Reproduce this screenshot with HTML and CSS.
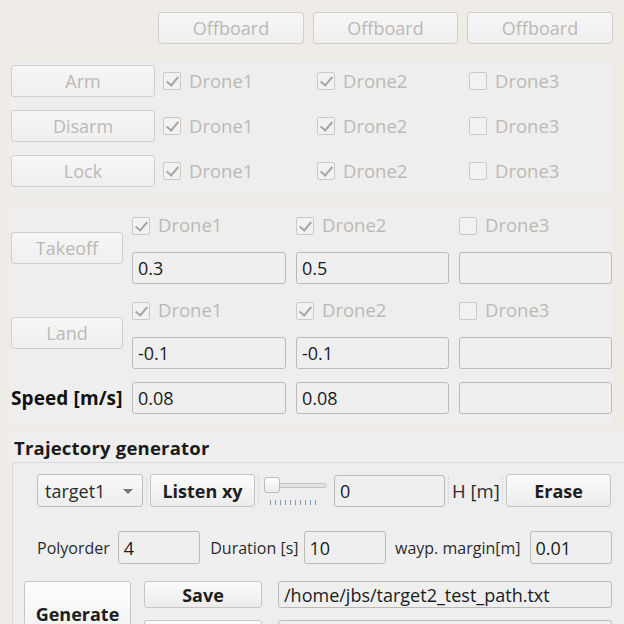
FILE: index.html
```html
<!DOCTYPE html>
<html>
<head>
<meta charset="utf-8">
<link rel="stylesheet" href="styles.css">
</head>
<body>
<div class="offrow">
  <button class="btn dis">Offboard</button>
  <button class="btn dis">Offboard</button>
  <button class="btn dis">Offboard</button>
</div>

<div class="panel p1">
  <button class="btn dis b1">Arm</button>
  <label class="cb"><span class="box on"></span>Drone1</label>
  <label class="cb"><span class="box on"></span>Drone2</label>
  <label class="cb"><span class="box"></span>Drone3</label>

  <button class="btn dis b1">Disarm</button>
  <label class="cb"><span class="box on"></span>Drone1</label>
  <label class="cb"><span class="box on"></span>Drone2</label>
  <label class="cb"><span class="box"></span>Drone3</label>

  <button class="btn dis b1">Lock</button>
  <label class="cb"><span class="box on"></span>Drone1</label>
  <label class="cb"><span class="box on"></span>Drone2</label>
  <label class="cb"><span class="box"></span>Drone3</label>
</div>

<div class="panel p2">
  <button class="btn dis b2 r12">Takeoff</button>
  <label class="cb"><span class="box on"></span>Drone1</label>
  <label class="cb"><span class="box on"></span>Drone2</label>
  <label class="cb"><span class="box"></span>Drone3</label>
  <div class="inp w1 c2">0.3</div>
  <div class="inp w2">0.5</div>
  <div class="inp w2"></div>

  <button class="btn dis b2 r34">Land</button>
  <label class="cb"><span class="box on"></span>Drone1</label>
  <label class="cb"><span class="box on"></span>Drone2</label>
  <label class="cb"><span class="box"></span>Drone3</label>
  <div class="inp w1 c2">-0.1</div>
  <div class="inp w2">-0.1</div>
  <div class="inp w2"></div>

  <div class="speed">Speed [m/s]</div>
  <div class="inp w1">0.08</div>
  <div class="inp w2">0.08</div>
  <div class="inp w2"></div>
</div>

<div class="traj">
  <div class="title">Trajectory generator</div>
  <div class="frame">
    <div class="row1">
      <div class="combo">target1<span class="arrow"></span></div>
      <span class="dots"></span>
      <button class="btn bold listen">Listen xy</button>
      <span class="dots"></span>
      <div class="slider">
        <div class="groove"></div>
        <div class="handle"></div>
        <div class="ticks"></div>
      </div>
      <div class="inp hin">0</div>
      <span class="dots"></span>
      <span class="hlabel">H [m]</span>
      <span class="dots"></span>
      <button class="btn bold erase">Erase</button>
    </div>
    <div class="row2">
      <span class="lbl">Polyorder</span>
      <div class="inp small poly">4</div>
      <span class="lbl">Duration [s]</span>
      <div class="inp small dur">10</div>
      <span class="lbl">wayp. margin[m]</span>
      <div class="inp small marg">0.01</div>
    </div>
    <div class="row3">
      <button class="btn bold gen"><span class="gtxt">Generate</span></button>
      <button class="btn bold save">Save</button>
      <div class="inp path">/home/jbs/target2_test_path.txt</div>
      <button class="btn save"></button>
      <div class="inp path"></div>
    </div>
  </div>
</div>
</body>
</html>
```
FILE: styles.css
```css
* { box-sizing: border-box; }
html, body { margin: 0; padding: 0; }
body {
  width: 624px;
  height: 624px;
  overflow: hidden;
  background: #efebe7;
  font-family: "Open Sans", "DejaVu Sans", sans-serif;
  font-size: 18px;
  color: #2b2b2b;
}

.btn {
  font-family: inherit;
  font-size: 18px;
  height: 32px;
  padding: 0;
  border: 1px solid #c9c6c2;
  border-radius: 3px;
  background: linear-gradient(#fbfbfb, #ececec);
  color: #2b2b2b;
  display: flex;
  align-items: center;
  justify-content: center;
  line-height: 1;
}
.btn.dis {
  color: #bcb9b5;
  border-color: #d2cfcb;
  background: linear-gradient(#f6f6f6, #efefef);
}
.btn.bold { font-weight: 700; color: #1e1e1e; }

.offrow {
  display: grid;
  grid-template-columns: 146px 145px 146px;
  column-gap: 9px;
  padding: 12px 0 0 158px;
}

.panel {
  background: #eeeeee;
  margin-left: 10px;
  width: 603px;
  display: grid;
  align-items: center;
}
.p1 {
  margin-top: 16px;
  padding: 5px 0 8px 1px;
  grid-template-columns: 152px 154px 152px 1fr;
  grid-auto-rows: 32px;
  row-gap: 13px;
}
.b1 { width: 144px; }

.cb {
  display: flex;
  align-items: center;
  color: #bcb9b5;
  font-size: 18.5px;
  line-height: 1;
}
.box {
  width: 18px;
  height: 18px;
  border: 1px solid #cdcac6;
  border-radius: 2px;
  background: #f2f2f2;
  margin-right: 8px;
  position: relative;
}
.box.on::after {
  content: "";
  position: absolute;
  left: 5px;
  top: 1px;
  width: 5px;
  height: 10px;
  border-right: 2px solid #a9a6a2;
  border-bottom: 2px solid #a9a6a2;
  transform: rotate(40deg);
}

.p2 {
  margin-top: 12px;
  padding: 5px 0 11px 1px;
  grid-template-columns: 121px 164px 163px 1fr;
  grid-template-rows: 27px 32px 27px 32px 32px;
  row-gap: 13px;
}
.b2 { width: 112px; }
.r12 { grid-row: 1 / 3; grid-column: 1; }
.r34 { grid-row: 3 / 5; grid-column: 1; }
.c2 { grid-column: 2; }
.speed { grid-column: 1; font-weight: 700; color: #111; font-size: 19px; white-space: nowrap; letter-spacing: 0.1px; }

.inp {
  height: 32px;
  border: 1px solid #bdbab6;
  border-radius: 3px;
  background: #efefef;
  display: flex;
  align-items: center;
  padding-left: 5px;
  color: #1c1c1c;
  font-size: 18px;
  white-space: nowrap;
  overflow: hidden;
}
.w1 { width: 154px; }
.w2 { width: 153px; }

.traj {
  margin: 8px 0 0 10px;
  background: #eeeeee;
  height: 200px;
}
.title {
  font-weight: 700;
  font-size: 18.5px;
  letter-spacing: 0.2px;
  color: #1a1a1a;
  height: 29px;
  padding: 3px 0 0 4px;
  line-height: 24px;
}
.frame {
  margin-left: 2px;
  border: 1px solid #d8d8d8;
  border-right: none;
  border-bottom: none;
  border-radius: 3px 0 0 0;
  height: 200px;
  padding: 11px 0 0 24px;
}
.row1 {
  display: flex;
  align-items: center;
  height: 33px;
}
.dots {
  width: 7px;
  height: 30px;
  background-image: radial-gradient(circle, #c4c4c4 0.6px, transparent 0.9px);
  background-size: 7px 3px;
  background-position: center;
  background-repeat: repeat-y;
  flex: none;
}
.combo {
  width: 106px;
  height: 33px;
  border: 1px solid #c2bfbb;
  border-radius: 3px;
  background: linear-gradient(#f8f8f8, #ededed);
  display: flex;
  align-items: center;
  padding-left: 7px;
  position: relative;
  color: #2b2b2b;
}
.arrow {
  position: absolute;
  right: 9px;
  top: 14px;
  border-left: 5px solid transparent;
  border-right: 5px solid transparent;
  border-top: 5px solid #777;
}
.listen { width: 105px; height: 33px; }
.slider {
  width: 65px;
  height: 33px;
  margin-left: 1px;
  position: relative;
  flex: none;
}
.groove {
  position: absolute;
  left: 2px;
  right: 1px;
  top: 9px;
  height: 5px;
  border: 1px solid #c4c4c4;
  border-radius: 3px;
  background: #e2e2e2;
}
.handle {
  position: absolute;
  left: 1px;
  top: 3px;
  width: 16px;
  height: 16px;
  border: 1px solid #b8b8b8;
  border-radius: 3px;
  background: linear-gradient(#ffffff, #ebebeb);
}
.ticks {
  position: absolute;
  left: 7px;
  width: 50px;
  top: 26px;
  height: 5px;
  background-image: linear-gradient(90deg, #7d9bb5 1px, transparent 1px);
  background-size: 5px 5px;
}
.hin { width: 111px; height: 32px; margin-left: 6px; }
.hlabel { color: #2b2b2b; font-size: 18.5px; width: 47px; flex: none; white-space: nowrap; }
.erase { width: 105px; height: 33px; }

.row2 {
  display: flex;
  align-items: center;
  margin: 6px 0 0 -1px;
  padding: 18px 0 13px 1px;
  background: #efefef;
  width: 576px;
}
.lbl { font-size: 16px; color: #2b2b2b; white-space: nowrap; }
.inp.small { height: 33px; width: 84px; }
.poly { margin: 0 10px 0 8px; }
.dur { margin: 0 9px 0 5px; }
.marg { margin-left: 9px; }

.row3 {
  display: grid;
  grid-template-columns: 107px 118px 334px;
  column-gap: 13px;
  grid-template-rows: 27px 27px;
  row-gap: 12px;
  margin: 4px 0 0 -13px;
}
.gen { grid-row: 1 / 3; height: 66px; width: 107px; align-items: flex-start; padding-top: 24px; background: linear-gradient(#fdfdfd, #f0f0f0); }
.gtxt { line-height: 17px; display: block; }
.save { height: 27px; width: 118px; }
.row3 .path { height: 27px; width: 334px; margin-left: 3px; }
```
